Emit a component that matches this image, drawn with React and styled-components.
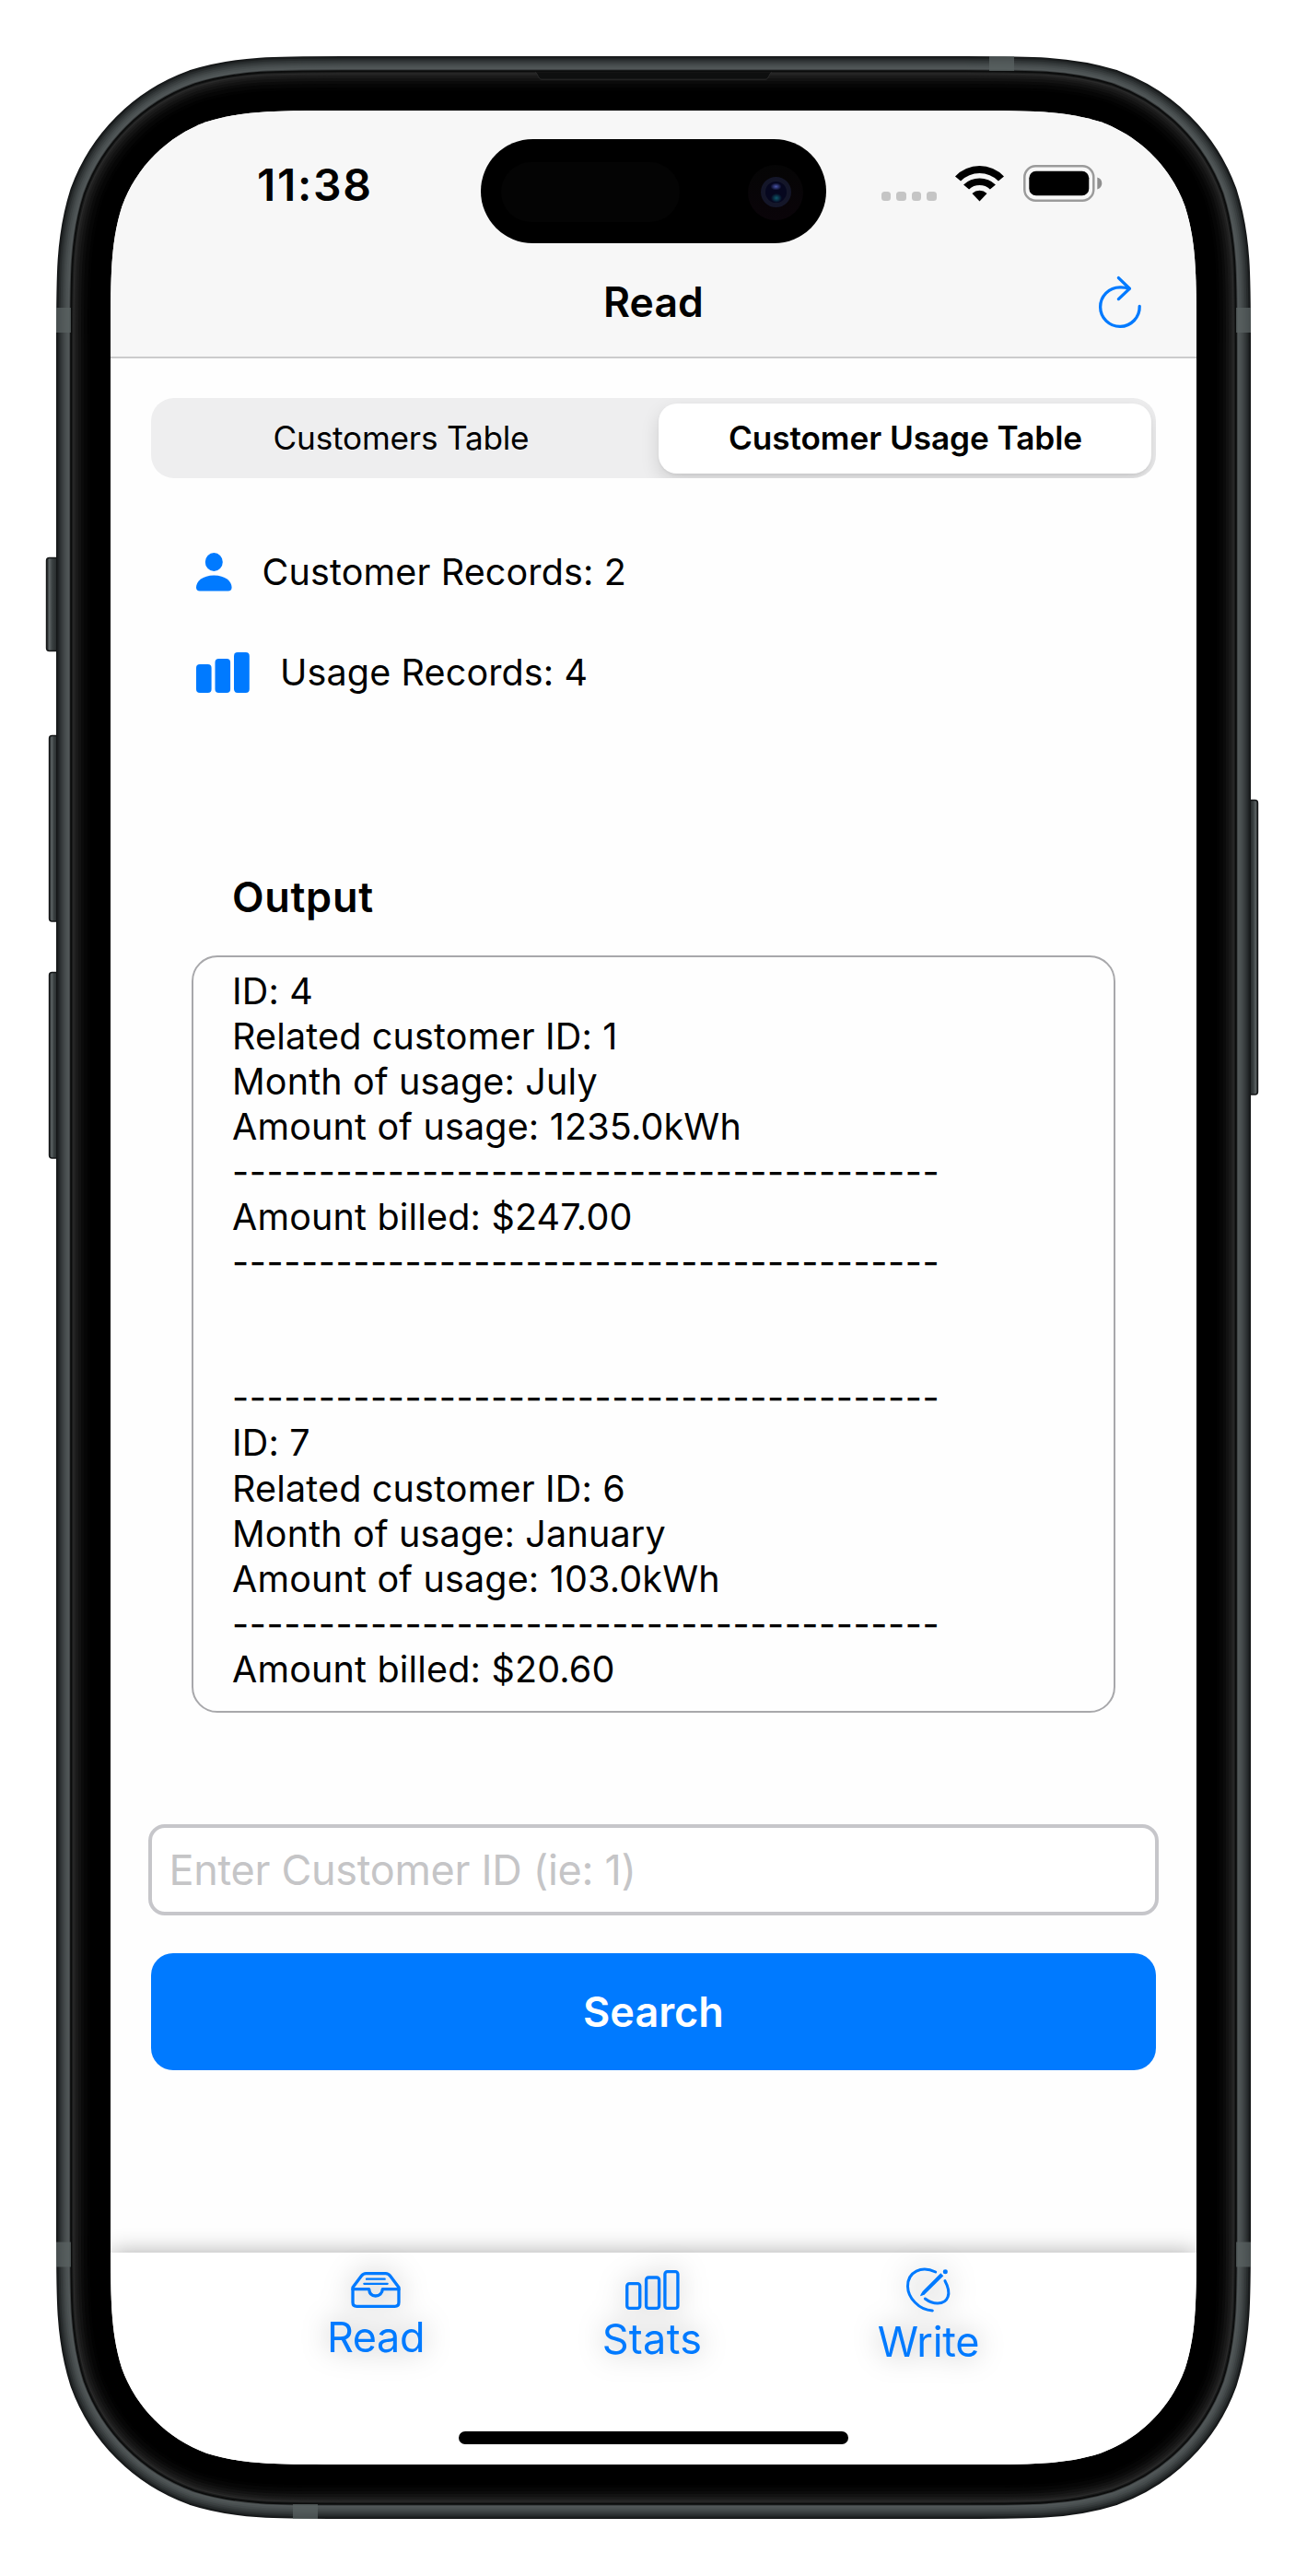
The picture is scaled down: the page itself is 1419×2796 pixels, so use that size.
import React from "react";
import styled, { createGlobalStyle } from "styled-components";

const BLUE = "#007aff";

const GlobalStyle = createGlobalStyle`
  * { box-sizing: border-box; }
  body { margin: 0; background: #fff; }
  button, input { font: inherit; }
`;

/* Continuous ("squircle") rounded rectangle */
function continuousRect(x, y, w, h, r) {
  const k = [1.528665, 1.08849296, 0.86840694, 0.63149379, 0.07491139, 0.37282383, 0.16905956].map((n) => n * r);
  const [a, b, c, d, e, f, g] = k;
  const R = x + w;
  const B = y + h;
  return [
    `M${x + a} ${y}H${R - a}`,
    `C${R - b} ${y} ${R - c} ${y} ${R - d} ${y + e}`,
    `C${R - f} ${y + g} ${R - g} ${y + f} ${R - e} ${y + d}`,
    `C${R} ${y + c} ${R} ${y + b} ${R} ${y + a}`,
    `V${B - a}`,
    `C${R} ${B - b} ${R} ${B - c} ${R - e} ${B - d}`,
    `C${R - g} ${B - f} ${R - f} ${B - g} ${R - d} ${B - e}`,
    `C${R - c} ${B} ${R - b} ${B} ${R - a} ${B}`,
    `H${x + a}`,
    `C${x + b} ${B} ${x + c} ${B} ${x + d} ${B - e}`,
    `C${x + f} ${B - g} ${x + g} ${B - f} ${x + e} ${B - d}`,
    `C${x} ${B - c} ${x} ${B - b} ${x} ${B - a}`,
    `V${y + a}`,
    `C${x} ${y + b} ${x} ${y + c} ${x + e} ${y + d}`,
    `C${x + g} ${y + f} ${x + f} ${y + g} ${x + d} ${y + e}`,
    `C${x + c} ${y} ${x + b} ${y} ${x + a} ${y}Z`,
  ].join("");
}

const Phone = styled.div`
  position: relative;
  width: 1419px;
  height: 2796px;
  padding: 120px 120px 121px;
  font-family: Inter, "Liberation Sans", sans-serif;
  color: #000;
  overflow: hidden;
`;

const FrameArt = styled.svg`
  position: absolute;
  inset: 0;
  width: 1419px;
  height: 2796px;
`;

const Screen = styled.main`
  position: relative;
  display: flex;
  flex-direction: column;
  width: 1179px;
  height: 2555px;
  background: #fefefe;
  clip-path: path("${continuousRect(0, 0, 1179, 2555, 165)}");
`;

const Header = styled.header`
  flex: none;
  height: 269px;
  background: #f7f7f7;
  border-bottom: 2px solid #cbcbcc;
`;

const StatusBar = styled.div`
  display: flex;
  align-items: center;
  justify-content: space-between;
  height: 162px;
  padding: 0 102px 0 159px;
`;

const Time = styled.span`
  font-size: 48px;
  font-weight: 600;
  line-height: 56px;
  letter-spacing: 1.7px;
`;

const StatusIcons = styled.div`
  display: flex;
  align-items: center;
  margin-top: -4px;
`;

const SignalDots = styled.div`
  display: flex;
  gap: 6px;
  margin: 28px 20px 0 0;
`;

const Dot = styled.i`
  width: 10.6px;
  height: 10.6px;
  border-radius: 3.5px;
  background: #c5c5c5;
`;

const Glyph = styled.svg`
  display: block;
  flex: none;
  overflow: visible;
`;

const BatteryGlyph = styled(Glyph)`
  margin-left: 21px;
`;

const NavBar = styled.div`
  display: grid;
  grid-template-columns: 1fr auto 1fr;
  align-items: center;
  height: 91px;
  padding: 0 60px;
`;

const NavTitle = styled.h1`
  grid-column: 2;
  margin: 0;
  font-size: 44.5px;
  font-weight: 600;
  line-height: 54px;
  letter-spacing: 0.1px;
`;

const IconButton = styled.button`
  justify-self: end;
  padding: 0;
  border: 0;
  background: none;
`;

const Island = styled.div`
  position: absolute;
  top: 30.5px;
  left: 402px;
  display: flex;
  align-items: center;
  justify-content: space-between;
  width: 375px;
  height: 113.5px;
  padding: 3px 25px 0 22px;
  border-radius: 57px;
  background: #000;
`;

const Sensor = styled.div`
  width: 194px;
  height: 65px;
  border-radius: 33px;
  background: #040404;
`;

const CameraRim = styled.div`
  display: grid;
  place-items: center;
  width: 60px;
  height: 60px;
  border-radius: 50%;
  background: linear-gradient(#050505, #0a0409);
`;

const CameraLens = styled.div`
  width: 33px;
  height: 33px;
  border: 5.5px solid #141629;
  border-radius: 50%;
  background:
    radial-gradient(ellipse 6px 4px at 50% 24%, #4a55a8 0%, rgba(40, 50, 140, 0) 100%),
    radial-gradient(ellipse 6px 5px at 52% 78%, #0e5a6c 0%, rgba(60, 20, 110, 0) 100%),
    #06071f;
`;

const Body = styled.section`
  display: flex;
  flex-direction: column;
  flex: 1;
  min-height: 0;
  padding: 43px 44px 0;
`;

const Segmented = styled.div`
  display: grid;
  grid-template-columns: 546px 1fr;
  height: 87px;
  padding: 5.5px 5px 5px;
  border-radius: 25px;
  background: #eeeeef;
  overflow: hidden;
`;

const Segment = styled.button`
  padding: ${(p) => (p.$active ? "0 0 1px 1px" : "0 13px 1px 0")};
  border: 0;
  border-radius: 20px;
  background: ${(p) => (p.$active ? "#fff" : "transparent")};
  box-shadow: ${(p) => (p.$active ? "0 8px 20px rgba(0,0,0,.13), 0 2px 3px rgba(0,0,0,.05)" : "none")};
  font-size: 35.2px;
  font-weight: ${(p) => (p.$active ? 600 : 400)};
  letter-spacing: ${(p) => (p.$active ? -0.07 : -0.2)}px;
  color: #000;
`;

const Records = styled.ul`
  display: grid;
  grid-auto-rows: 109px;
  margin: 47px 0 0;
  padding: 0 0 0 49px;
  list-style: none;
`;

const RecordRow = styled.li`
  display: flex;
  align-items: center;
  gap: 33px;
  font-size: 39.5px;
  letter-spacing: 0.13px;
`;

const OutputTitle = styled.h2`
  margin: 160px 0 33px 88px;
  font-size: 45px;
  font-weight: 600;
  line-height: 60px;
  letter-spacing: 0.7px;
`;

const OutputBox = styled.div`
  height: 822px;
  margin: 0 44px;
  padding: 12.5px 0 0 42px;
  border: 2px solid #a8a8ab;
  border-radius: 28px;
`;

const Line = styled.p`
  height: 49.1px;
  margin: 0;
  font-size: 39.5px;
  line-height: 49.1px;
  white-space: pre;
  letter-spacing: ${(p) => (p.$rule ? 0.57 : 0.17)}px;
`;

const IdInput = styled.input`
  flex: none;
  height: 99px;
  margin: 120.5px -3px 0;
  padding: 0 18.5px;
  border: 4px solid #c6c6ca;
  border-radius: 18px;
  background: #fff;
  outline: none;
  font-size: 45px;
  letter-spacing: -0.3px;
  &::placeholder { color: #c5c5c7; opacity: 1; }
`;

const SearchButton = styled.button`
  flex: none;
  height: 127px;
  margin-top: 41px;
  border: 0;
  border-radius: 24px;
  background: ${BLUE};
  color: #fff;
  font-size: 45px;
  font-weight: 600;
`;

const TabBar = styled.nav`
  position: relative;
  display: flex;
  justify-content: center;
  flex: none;
  height: 230.5px;
  padding: 18px 3px 0 0;
  background: #fff;
  box-shadow: 0 0 24px rgba(0, 0, 0, 0.33);
`;

const Tab = styled.a`
  display: flex;
  flex-direction: column;
  align-items: center;
  justify-content: center;
  gap: ${(p) => p.$gap}px;
  width: 300px;
  height: 105px;
  color: ${BLUE};
  font-size: 45px;
  line-height: 54px;
  letter-spacing: ${(p) => p.$track}px;
  filter: drop-shadow(0 0 15px rgba(0, 0, 0, 0.33));
`;

const HomeIndicator = styled.div`
  position: absolute;
  left: 378px;
  bottom: 22px;
  width: 423px;
  height: 14px;
  border-radius: 7px;
  background: #000;
`;

const RIM = [
  [0, "#141617"], [1, "#1a1d1e"], [2.5, "#272b2c"], [4.5, "#323738"], [6.5, "#3c4142"],
  [8.5, "#454b4c"], [10.5, "#4c5253"], [12.5, "#515758"], [14.3, "#3a3e3f"], [15.2, "#0b0c0c"],
  [17, "#1a1b1b"], [18.2, "#2a2a2a"], [19.5, "#202020"], [21.5, "#191919"], [24, "#121212"],
  [27, "#0b0b0b"], [30, "#060606"], [34, "#020202"], [37, "#000"],
];

const BANDS = [
  [61, 334, 16, 27], [1342, 334, 16, 27], [61, 2433.5, 16, 27], [1342, 2433.5, 16, 27],
  [1074, 61, 27, 16], [318, 2718, 27, 16],
];

const KEYS = [
  [50, 605, 14, 102], [53, 798, 11, 202.5], [53, 1055, 11, 202.5], [1355, 868, 10, 320.5],
];

function Frame() {
  const d = continuousRect(120, 120, 1179, 2555, 165);
  return (
    <FrameArt viewBox="0 0 1419 2796" aria-hidden="true">
      <defs>
        <linearGradient id="key">
          <stop offset="0" stopColor="#15181a" />
          <stop offset=".22" stopColor="#5d6465" />
          <stop offset=".45" stopColor="#3a4041" />
          <stop offset="1" stopColor="#1c1f20" />
        </linearGradient>
        <linearGradient id="keyRight" x1="1" x2="0">
          <stop offset="0" stopColor="#15181a" />
          <stop offset=".22" stopColor="#5d6465" />
          <stop offset=".45" stopColor="#3a4041" />
          <stop offset="1" stopColor="#1c1f20" />
        </linearGradient>
      </defs>
      {KEYS.map(([x, y, w, h]) => (
        <rect key={x + "-" + y} x={x + 0.5} y={y + 0.5} width={w} height={h - 1} rx="3"
          fill={x > 700 ? "url(#keyRight)" : "url(#key)"} stroke="#141617" strokeWidth="1.4" />
      ))}
      {RIM.map(([o, color]) => (
        <path key={o} d={d} fill="none" stroke={color} strokeWidth={(59 - o) * 2} />
      ))}
      {BANDS.map(([x, y, w, h]) => (
        <rect key={x + "-" + y} x={x} y={y} width={w} height={h} fill="#5a6162" fillOpacity=".75" />
      ))}
      <path d="M581 78.5C584 79 584 86.2 588 86.2H831C835 86.2 835 79 838 78.5" fill="#0e0f0f" stroke="#2b2b2b" />
    </FrameArt>
  );
}

const Wifi = () => (
  <Glyph width="53" height="39" viewBox="352 419 158 116">
    <path d="M352 453A109 109 0 0 1 510 453L492 468A87 87 0 0 0 370 468ZM379 480A75 75 0 0 1 483 480L465 495A50 50 0 0 0 397 495ZM407 508A36 36 0 0 1 455 508L431 534Z" />
  </Glyph>
);

const Battery = () => (
  <BatteryGlyph width="86" height="40" viewBox="0 0 86 40">
    <rect x="1.3" y="1.3" width="75" height="37.4" rx="12" fill="none" stroke="#9b9b9b" strokeWidth="2.5" />
    <rect x="6.3" y="6.7" width="65" height="26.6" rx="7.5" />
    <path d="M80.3 13.6Q85.3 15 85.3 20T80.3 26.4Z" fill="#8f8f8f" />
  </BatteryGlyph>
);

const Refresh = () => (
  <Glyph width="46" height="56" viewBox="1193 300 46 56" fill="none" stroke={BLUE} strokeWidth="3.3" strokeLinecap="round" strokeLinejoin="round">
    <path d="M1237.2 332.4A21.3 21.3 0 1 1 1216 311.8Q1221 311.6 1226 313.2" />
    <path d="M1214.4 301.6L1226.4 313.2L1214.4 324.6" />
  </Glyph>
);

const Person = () => (
  <Glyph width="38.6" height="41.5" viewBox="0 0 38.6 41.5" fill={BLUE}>
    <ellipse cx="19.3" cy="10" rx="9.5" ry="10" />
    <path d="M0 37.5C0 31 7 24.4 19.3 24.4S38.6 31 38.6 37.5Q38.6 41.5 34.6 41.5H4Q0 41.5 0 37.5Z" />
  </Glyph>
);

const BarsFilled = () => (
  <Glyph width="58" height="44" viewBox="0 0 58 44" fill={BLUE}>
    <rect x="0" y="13" width="16.6" height="31" rx="4" />
    <rect x="20.5" y="7" width="16.6" height="37" rx="4" />
    <rect x="41" y="0" width="16.8" height="44" rx="4" />
  </Glyph>
);

const Tray = () => (
  <Glyph width="54" height="39.3" viewBox="244 137 162 118" fill="none" stroke={BLUE} strokeWidth="10" strokeLinecap="round" strokeLinejoin="round">
    <path d="M250 187L277 151Q284 142 293 142H357Q366 142 373 151L400 187V236Q400 249 387 249H263Q250 249 250 236Z" />
    <path d="M250 193H303C304 207 311 215 324 215S346 207 347 193H400" />
    <path d="M295 160H354M287 175.5H363" strokeWidth="7" />
  </Glyph>
);

const BarsOutline = () => (
  <Glyph width="58.5" height="43" viewBox="1134 132 175 129" fill="none" stroke={BLUE} strokeWidth="10">
    <rect x="1139" y="176" width="42" height="80" rx="8" />
    <rect x="1201.5" y="156" width="42" height="100" rx="8" />
    <rect x="1262.5" y="137" width="42" height="119" rx="8" />
  </Glyph>
);

const PencilScribble = () => (
  <Glyph width="48" height="48.3" viewBox="853 128 144 145" fill="none" stroke={BLUE} strokeWidth="9" strokeLinecap="round">
    <path d="M948 143C903 121 857 142 857.5 190C858 226 893 267 938 269" />
    <path d="M979 172C1002 214 989 245 955 245C940 245 927 240 914 230" />
    <path d="M965 147L974 156L913 216Q906 221 898 222Q900 214 906 206Z" fill={BLUE} stroke="none" />
    <circle cx="980" cy="142" r="7.5" fill={BLUE} stroke="none" />
  </Glyph>
);

const RULE = "-".repeat(41);
const OUTPUT = [
  "ID: 4",
  "Related customer ID: 1",
  "Month of usage: July",
  "Amount of usage: 1235.0kWh",
  RULE,
  "Amount billed: $247.00",
  RULE,
  "",
  "",
  RULE,
  "ID: 7",
  "Related customer ID: 6",
  "Month of usage: January",
  "Amount of usage: 103.0kWh",
  RULE,
  "Amount billed: $20.60",
];

export default function App() {
  return (
    <Phone>
      <GlobalStyle />
      <Frame />
      <Screen>
        <Header>
          <StatusBar>
            <Time>11:38</Time>
            <StatusIcons>
              <SignalDots><Dot /><Dot /><Dot /><Dot /></SignalDots>
              <Wifi />
              <Battery />
            </StatusIcons>
          </StatusBar>
          <NavBar>
            <NavTitle>Read</NavTitle>
            <IconButton aria-label="Refresh"><Refresh /></IconButton>
          </NavBar>
        </Header>
        <Island>
          <Sensor />
          <CameraRim><CameraLens /></CameraRim>
        </Island>
        <Body>
          <Segmented>
            <Segment>Customers Table</Segment>
            <Segment $active>Customer Usage Table</Segment>
          </Segmented>
          <Records>
            <RecordRow><Person />Customer Records: 2</RecordRow>
            <RecordRow><BarsFilled />Usage Records: 4</RecordRow>
          </Records>
          <OutputTitle>Output</OutputTitle>
          <OutputBox>
            {OUTPUT.map((text, i) => (
              <Line key={i} $rule={text === RULE}>{text}</Line>
            ))}
          </OutputBox>
          <IdInput placeholder="Enter Customer ID (ie: 1)" />
          <SearchButton>Search</SearchButton>
        </Body>
        <TabBar>
          <Tab $gap={4.5} $track={-0.4}><Tray />Read</Tab>
          <Tab $gap={4.5} $track={0.3}><BarsOutline />Stats</Tab>
          <Tab $gap={6} $track={-0.3}><PencilScribble />Write</Tab>
          <HomeIndicator />
        </TabBar>
      </Screen>
    </Phone>
  );
}
